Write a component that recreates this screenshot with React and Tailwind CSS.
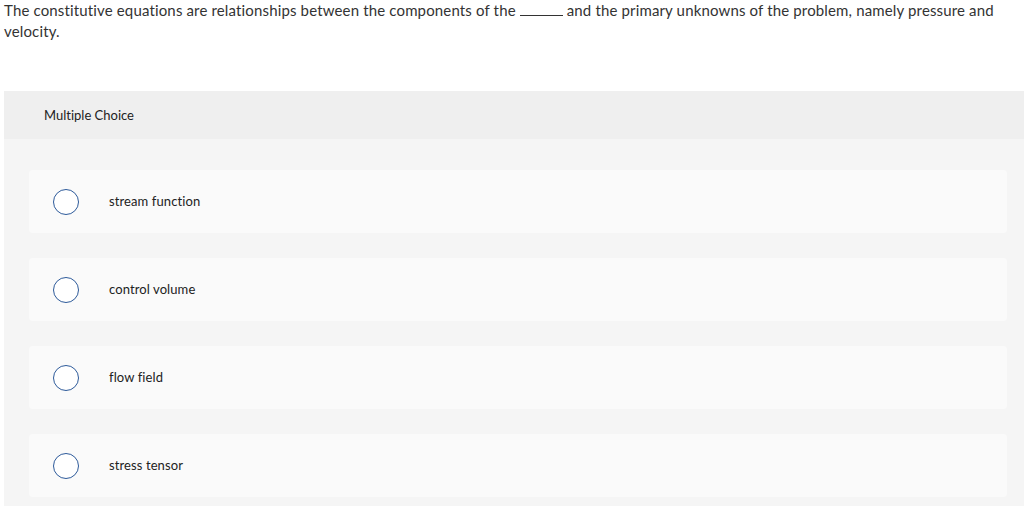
const choices = ['stream function', 'control volume', 'flow field', 'stress tensor']

export default function App() {
  return (
    <div className="min-h-[506px] bg-white font-['Lato','Open_Sans',sans-serif] text-[#333] [font-variant-ligatures:none]">
      <p className="px-1 text-[15px] leading-[21px] tracking-[0.15px]">
        The constitutive equations are relationships between the components of the{' '}
        <span className="inline-block h-px w-[43px] bg-[#333] align-baseline"></span> and the
        primary unknowns of the problem, namely pressure and velocity.
      </p>

      <div className="ml-1 mt-[49px]">
        <div className="flex h-[48px] items-center bg-[#efefef] pl-10 text-[13px] text-[#222]">
          <span className="pt-px">Multiple Choice</span>
        </div>
        <div className="flex flex-col gap-[25px] bg-[#f5f5f5] pb-6 pl-[25px] pr-[17px] pt-[31px]">
          {choices.map((c) => (
            <label key={c} className="flex h-[63px] items-center rounded bg-[#fafafa] pl-6">
              <span className="h-[26px] w-[26px] shrink-0 rounded-full border border-[#2d5a9a] bg-white"></span>
              <span className="ml-[30px] text-[13px] tracking-[0.1px] text-[#222]">{c}</span>
            </label>
          ))}
        </div>
      </div>
    </div>
  )
}
